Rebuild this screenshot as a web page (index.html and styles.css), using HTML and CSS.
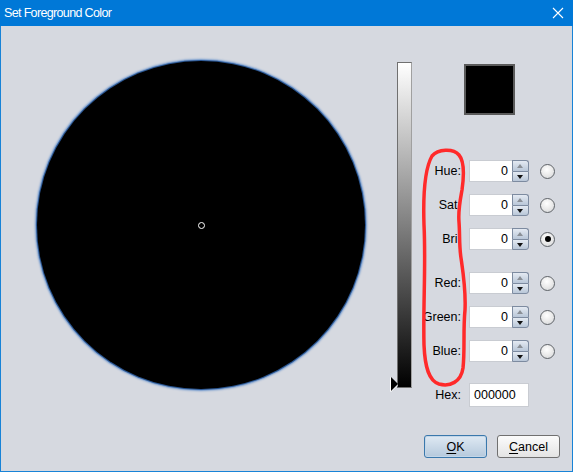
FILE: index.html
```html
<!DOCTYPE html>
<html>
<head>
<meta charset="utf-8">
<link rel="stylesheet" href="styles.css">
</head>
<body>
<div class="window">
  <div class="titlebar">
    <span class="title">Set Foreground Color</span>
    <svg class="close" width="12" height="12" viewBox="0 0 12 12"><path d="M1 1L11 11M11 1L1 11" stroke="#fff" stroke-width="1.1" fill="none"/></svg>
  </div>
  <div class="content">
    <div class="wheel"><div class="marker"></div></div>
    <div class="slider"><div class="thumb"></div></div>
    <div class="panel">
      <div class="swatch"></div>
      <div class="rows">
        <div class="row">
          <span class="lbl">Hue:</span>
          <div class="spin"><div class="field">0</div><div class="btns"><div class="b up"></div><div class="b down"></div></div></div>
          <div class="radio"></div>
        </div>
        <div class="row">
          <span class="lbl">Sat:</span>
          <div class="spin"><div class="field">0</div><div class="btns"><div class="b up"></div><div class="b down"></div></div></div>
          <div class="radio"></div>
        </div>
        <div class="row">
          <span class="lbl">Bri:</span>
          <div class="spin"><div class="field">0</div><div class="btns"><div class="b up"></div><div class="b down"></div></div></div>
          <div class="radio on"></div>
        </div>
        <div class="row sep">
          <span class="lbl">Red:</span>
          <div class="spin"><div class="field">0</div><div class="btns"><div class="b up"></div><div class="b down"></div></div></div>
          <div class="radio"></div>
        </div>
        <div class="row">
          <span class="lbl">Green:</span>
          <div class="spin"><div class="field">0</div><div class="btns"><div class="b up"></div><div class="b down"></div></div></div>
          <div class="radio"></div>
        </div>
        <div class="row">
          <span class="lbl">Blue:</span>
          <div class="spin"><div class="field">0</div><div class="btns"><div class="b up"></div><div class="b down"></div></div></div>
          <div class="radio"></div>
        </div>
        <div class="row hexrow">
          <span class="lbl">Hex:</span>
          <div class="hex">000000</div>
        </div>
      </div>
      <div class="buttons">
        <button class="btn ok"><u>O</u>K</button>
        <button class="btn cancel"><u>C</u>ancel</button>
      </div>
    </div>
  </div>
  <svg class="scribble" width="573" height="472" viewBox="0 0 573 472">
    <path d="M432 156 C438 149 453 148 459 155 C465 162 464 176 462 190 C460 201 458 210 459 222 C460 235 459 245 461 258 C463 272 466 290 465 310 C463 330 465 350 463 368 C461 382 450 387 439 384 C429 381 425 368 424 345 C423 305 426 265 424 225 C423 195 424 170 432 156 Z" fill="none" stroke="#ff2a2a" stroke-width="3.5" stroke-linejoin="round"/>
  </svg>
</div>
</body>
</html>
```
FILE: styles.css
```css
* { box-sizing: border-box; }
html, body { margin: 0; padding: 0; }
body { width: 573px; height: 472px; overflow: hidden; font-family: "Liberation Sans", Arial, sans-serif; }
.window {
  position: relative;
  width: 573px; height: 472px;
  border: 1px solid #1883d7;
  border-top: none;
  background: #d6d9e0;
  display: flex; flex-direction: column;
}
.titlebar {
  height: 26px; background: #0078d7; color: #fff;
  display: flex; align-items: center; justify-content: space-between;
  padding: 0 9px 0 4px; margin: 0 -1px;
  flex: none;
}
.title { font-size: 12.5px; letter-spacing: -0.65px; }
.close { display: block; }
.content { display: flex; align-items: flex-start; flex: 1; }
.wheel {
  position: relative;
  width: 328px; height: 328px; margin: 35px 0 0 36px;
  border-radius: 50%;
  background: #000;
  box-shadow: 0 0 0 1px #2a5590, 0 0 2px 2px #6792cb;
  flex: none;
}
.marker {
  position: absolute; left: 161px; top: 161px;
  width: 7px; height: 7px; border-radius: 50%;
  border: 1px solid #fff;
}
.slider {
  position: relative;
  width: 15px; height: 326px; margin: 36px 0 0 32px;
  border: 1px solid #707070; border-right-color: #a0a0a0;
  background: linear-gradient(#ffffff, #000000);
  flex: none;
}
.thumb {
  position: absolute; left: -7px; top: 314px;
  width: 0; height: 0;
  border-top: 7px solid transparent; border-bottom: 7px solid transparent;
  border-left: 7px solid #000;
  filter: drop-shadow(-1px 0 0 #fff) drop-shadow(0 1px 0 #fff);
}
.panel { flex: 1; display: flex; flex-direction: column; }
.swatch {
  width: 51px; height: 51px; margin: 38px 0 0 52px;
  background: #000; border: 2px solid #5a5a5a;
}
.rows { margin-top: 45px; display: flex; flex-direction: column; gap: 12px; }
.row {
  display: grid;
  grid-template-columns: 50px 60px 15px;
  column-gap: 7px;
  height: 22px;
  align-items: center;
}
.row.sep { margin-top: 10px; }
.row .radio { margin-left: 4px; }
.lbl { font-size: 12.5px; color: #000; text-align: right; margin-right: 1px; }
.spin { display: flex; height: 22px; }
.field {
  width: 43px; height: 22px; background: #fff;
  border: 1px solid #c9ccd2; border-right: none;
  font-size: 12.5px; text-align: right; padding: 3px 4px 0 0; color: #000;
}
.btns { width: 17px; display: flex; flex-direction: column; }
.b {
  flex: 1; position: relative;
  border: 1px solid #7d8ba0;
  background: linear-gradient(#e4eaf2, #b9c7d8);
}
.b.up { border-radius: 0 3px 0 0; border-bottom: none; }
.b.down { border-radius: 0 0 3px 0; }
.b::after {
  content: ""; position: absolute; left: 4px; top: 3px;
  width: 0; height: 0;
  border-left: 3.5px solid transparent; border-right: 3.5px solid transparent;
}
.b.up::after { border-bottom: 4px solid #8a8f96; }
.b.down::after { border-top: 4px solid #111; top: 3px; }
.radio {
  width: 15px; height: 15px; border-radius: 50%;
  border: 1px solid #5f6368;
  background: radial-gradient(circle at 45% 35%, #ffffff, #e8e8e8 55%, #cfd2d6);
  position: relative;
}
.radio.on::after {
  content: ""; position: absolute; left: 3.5px; top: 3.5px;
  width: 6px; height: 6px; border-radius: 50%; background: #000;
}
.row.hexrow { margin-top: 9px; height: 24px; }
.hex {
  width: 60px; height: 24px; background: #fff;
  border: 1px solid #c9ccd2;
  font-size: 12.5px; padding: 4px 0 0 4px; color: #000;
}
.buttons { display: flex; gap: 10px; margin: 28px 0 0 12px; }
.btn {
  width: 63px; height: 23px; border-radius: 3px;
  font-family: "Liberation Sans", Arial, sans-serif; font-size: 12.5px; color: #000;
  padding: 0; margin: 0;
}
.btn u { text-decoration: underline; text-underline-offset: 2px; }
.ok { border: 1px solid #3a78ac; background: linear-gradient(#dfe9f3, #b5c9dc); box-shadow: inset 0 0 0 1px #c3d6e8; }
.cancel { border: 1px solid #707070; background: linear-gradient(#fbfbfb, #e4e4e4); }
.scribble { position: absolute; left: -1px; top: 0; pointer-events: none; }
```
